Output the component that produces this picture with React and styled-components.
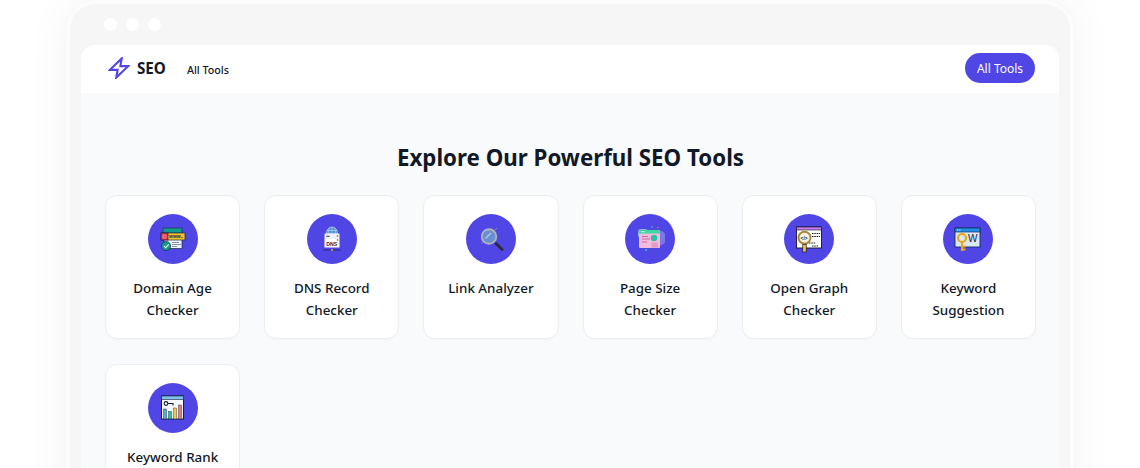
import React from "react";
import styled, { createGlobalStyle } from "styled-components";

const Global = createGlobalStyle`
  html, body { margin: 0; padding: 0; background: #fff; }
  body { font-family: "Noto Sans", "Open Sans", sans-serif; color: #111827; overflow: hidden; height: 468px; }
`;
const Stage = styled.div`
  height: 468px;
  overflow: hidden;
  padding: 0 66px;
`;
const Frame = styled.div`
  width: 1008px;
  height: 560px;
  box-sizing: border-box;
  background: #f6f6f6;
  border: 4px solid #fcfcfc;
  border-radius: 30px;
  box-shadow: 0 0 3px rgba(0, 0, 0, 0.025), 0 0 44px rgba(0, 0, 0, 0.055);
  padding: 0 11px;
`;
const Dots = styled.div`
  display: flex;
  gap: 9px;
  height: 41px;
  padding: 14px 0 0 23px;
  box-sizing: border-box;
`;
const Dot = styled.span`
  width: 13px;
  height: 13px;
  border-radius: 50%;
  background: #fff;
`;
const Window = styled.div`
  background: #f9fafb;
  border-radius: 14px 14px 0 0;
  overflow: hidden;
  height: 520px;
`;
const Header = styled.header`
  height: 48px;
  box-sizing: border-box;
  background: #fff;
  display: flex;
  align-items: center;
  padding: 0 24px 2px 27px;
`;
const Brand = styled.div`
  display: flex;
  align-items: center;
  gap: 7px;
  font-size: 15.2px;
  font-weight: 700;
  color: #111827;
`;
const NavLink = styled.a`
  font-size: 10.7px;
  font-weight: 500;
  color: #111827;
  margin-left: 21px;
  margin-top: 4px;
`;
const Pill = styled.button`
  margin-left: auto;
  height: 30px;
  width: 70px;
  border: 0;
  padding: 0;
  border-radius: 15px;
  background: #4f46e5;
  color: #fff;
  font: 400 12px "Noto Sans", sans-serif;
`;
const Main = styled.main`
  padding: 47px 23px 0 24px;
`;
const Title = styled.h1`
  margin: 0 0 19px;
  font-size: 22.3px;
  line-height: 36px;
  font-weight: 700;
  text-align: center;
  color: #111827;
`;
const Grid = styled.div`
  display: grid;
  grid-template-columns: repeat(6, 1fr);
  gap: 25px 24px;
`;
const Card = styled.div`
  height: 144px;
  box-sizing: border-box;
  background: #fff;
  border: 1px solid #eceef1;
  border-radius: 12px;
  padding: 18px 12px 0;
  display: flex;
  flex-direction: column;
  align-items: center;
  box-shadow: 0 1px 2px rgba(0, 0, 0, 0.02);
`;
const Badge = styled.div`
  width: 50px;
  height: 50px;
  border-radius: 50%;
  background: #4f46e5;
  display: flex;
  align-items: center;
  justify-content: center;
  flex: none;
`;
const Label = styled.div`
  margin-top: 13px;
  font-size: 13.4px;
  line-height: 22px;
  font-weight: 500;
  text-align: center;
  color: #111827;
  max-width: 100px;
`;

const Ico = styled.svg`
  width: 30px;
  height: 30px;
  display: block;
`;
const Mini = styled.text`
  font-family: "Liberation Sans", sans-serif;
  font-weight: 700;
`;

const Bolt = () => (
  <svg width="22" height="22" viewBox="0 0 24 24" fill="none" stroke="#4f46e5" strokeWidth="2.3" strokeLinejoin="miter">
    <path d="M15 1.5 13.5 10H22L9 22.5 10.5 14H2Z" />
  </svg>
);

const DomainIcon = () => (
  <Ico viewBox="0 0 30 30">
    <rect x="5" y="4" width="19" height="5" fill="#0f9d8a" stroke="#1f2a44" strokeWidth=".6" />
    <rect x="6" y="15" width="18" height="9.5" fill="#eef1f8" stroke="#1f2a44" strokeWidth=".7" />
    <rect x="3" y="9" width="24" height="7" fill="#f4c430" stroke="#1f2a44" strokeWidth=".7" />
    <rect x="3" y="9" width="7" height="7" fill="#e02d3c" stroke="#1f2a44" strokeWidth=".7" />
    <rect x="5" y="11" width="3" height="3" fill="none" stroke="#fff" strokeWidth=".5" />
    <Mini x="11" y="14.4" fontSize="5" fill="#1f2a44">www..</Mini>
    <path d="M14 18.5h7M14 20.5h9M14 22.5h5" stroke="#7c8aa5" strokeWidth=".9" />
    <circle cx="8" cy="22" r="4.6" fill="#0f9d8a" stroke="#1f2a44" strokeWidth=".7" />
    <path d="m6 22 1.7 1.8 3-3.5" fill="none" stroke="#fff" strokeWidth="1.1" />
  </Ico>
);
const DnsIcon = () => (
  <Ico viewBox="0 0 30 30">
    <path d="M9.5 9.5C9.5 5 12.5 3 15 3s5.500 2 5.500 6.500Z" fill="#4a90d9" stroke="#dfe6f5" strokeWidth=".6" />
    <path d="M15 3v6M12.500 4c-.8 2-.8 3-.8 5.500M17.500 4c.8 2 .8 3 .8 5.500M10 6.500h10" stroke="#dfe6f5" strokeWidth=".5" fill="none" />
    <rect x="7.500" y="9.500" width="15" height="5.500" fill="#eef1f8" />
    <rect x="7.500" y="15" width="15" height="8.500" fill="#fff" />
    <path d="M9.500 12.200h3" stroke="#1f2a44" strokeWidth="1.1" />
    <circle cx="20.500" cy="12" r=".9" fill="#c08a5a" />
    <circle cx="20.500" cy="16" r=".9" fill="#c08a5a" />
    <Mini x="9.300" y="21.800" fontSize="5.200" fill="#1f2a44">DNS</Mini>
    <path d="M6 26h18" stroke="#2c2a80" strokeWidth="1" />
    <rect x="14" y="25" width="2" height="2" fill="#b98a52" />
  </Ico>
);
const LinkIcon = () => (
  <Ico viewBox="0 0 30 30">
    <path d="M5.500 19.500 21 4" stroke="#8a9a7a" strokeWidth=".9" />
    <circle cx="13" cy="12.500" r="7.300" fill="#6a8fd0" stroke="#aeb2bd" strokeWidth="1.900" />
    <path d="m9.500 14.500 5.500-5.500" stroke="#a9c3e8" strokeWidth="1.500" />
    <path d="m20 19.500 6 6" stroke="#2a2a3a" strokeWidth="2.800" strokeLinecap="round" />
  </Ico>
);
const PageIcon = () => (
  <Ico viewBox="0 0 30 30">
    <circle cx="24" cy="14" r="7.500" fill="#7d77e8" />
    <rect x="3" y="5" width="10" height="9" rx="3" fill="#86b9e6" />
    <rect x="4" y="6" width="21" height="18" rx="1" fill="#f0bddc" />
    <rect x="4" y="6" width="21" height="3.500" fill="#3fd8a0" />
    <path d="M6 7.700h4" stroke="#fff" strokeWidth=".7" />
    <path d="M7 12.500h6M7 15h8M7 18h5" stroke="#cf5c9d" strokeWidth=".9" />
    <circle cx="19" cy="14" r="3.200" fill="#33bfa5" />
    <rect x="16.500" y="18.500" width="6.500" height="5" fill="#e59ac6" />
    <circle cx="11" cy="26" r="1.200" fill="#3aa9c4" />
    <circle cx="17" cy="3" r=".8" fill="#3fd8a0" />
    <circle cx="23" cy="3.500" r=".8" fill="#e0589a" />
  </Ico>
);
const GraphIcon = () => (
  <Ico viewBox="0 0 30 30">
    <rect x="2.500" y="3" width="25" height="21" fill="#fff" stroke="#15152a" strokeWidth=".9" />
    <rect x="2.500" y="3" width="25" height="3" fill="#c77dea" stroke="#15152a" strokeWidth=".6" />
    <path d="M18 9.500h8M18 12.500h8M15 19h7M18 22h6" stroke="#15152a" strokeWidth="1.200" strokeDasharray="1.500 .8" />
    <circle cx="10.500" cy="13.700" r="6" fill="#f6f3e7" stroke="#a98a3a" strokeWidth="2" />
    <Mini x="6.600" y="15.500" fontSize="4.800" fill="#15152a">&lt;/&gt;</Mini>
    <rect x="8.800" y="20.500" width="3.400" height="7.500" fill="#f3c84a" stroke="#15152a" strokeWidth=".7" />
  </Ico>
);
const KeywordIcon = () => (
  <Ico viewBox="0 0 30 30">
    <rect x="2" y="4" width="25" height="19" fill="#d9e8fb" stroke="#12305c" strokeWidth=".9" />
    <rect x="2" y="4" width="25" height="4" fill="#1f8fe8" stroke="#12305c" strokeWidth=".7" />
    <path d="M4 6h4" stroke="#fff" strokeWidth="1" strokeDasharray="1 .8" />
    <text x="15" y="18" fontSize="10" fontFamily="Liberation Sans, sans-serif" fill="#15223c">W</text>
    <circle cx="9" cy="14" r="4" fill="#d9e8fb" stroke="#e6a913" strokeWidth="2.200" />
    <path d="M9 18v9M9 22.500h3.500M9 25.500h3.500" stroke="#e6a913" strokeWidth="2.200" fill="none" />
  </Ico>
);
const RankIcon = () => (
  <Ico viewBox="0 0 30 30">
    <rect x="3.500" y="3" width="22" height="23" fill="#f6f7f9" stroke="#15223c" strokeWidth="1" />
    <rect x="3.500" y="3" width="22" height="3.500" fill="#7fc4e8" stroke="#15223c" strokeWidth=".6" />
    <circle cx="8" cy="10.500" r="1.900" fill="none" stroke="#15223c" strokeWidth="1.100" />
    <path d="M10 10.500h5v2" fill="none" stroke="#15223c" strokeWidth="1.100" />
    <rect x="5.500" y="16" width="3" height="10" fill="#57a9d8" stroke="#15223c" strokeWidth=".4" />
    <rect x="10.500" y="18.500" width="3" height="7.500" fill="#2fc29a" stroke="#15223c" strokeWidth=".4" />
    <rect x="15.500" y="15" width="3" height="11" fill="#f3c84a" stroke="#15223c" strokeWidth=".4" />
    <rect x="20.500" y="12" width="3" height="14" fill="#ee7a6b" stroke="#15223c" strokeWidth=".4" />
  </Ico>
);

const tools = [
  { name: "Domain Age Checker", Icon: DomainIcon },
  { name: "DNS Record Checker", Icon: DnsIcon },
  { name: "Link Analyzer", Icon: LinkIcon },
  { name: "Page Size Checker", Icon: PageIcon },
  { name: "Open Graph Checker", Icon: GraphIcon },
  { name: "Keyword Suggestion", Icon: KeywordIcon },
  { name: "Keyword Rank Checker", Icon: RankIcon },
];

export default function App() {
  return (
    <Stage>
      <Global />
      <Frame>
        <Dots>
          <Dot />
          <Dot />
          <Dot />
        </Dots>
        <Window>
          <Header>
            <Brand>
              <Bolt />
              SEO
            </Brand>
            <NavLink>All Tools</NavLink>
            <Pill>All Tools</Pill>
          </Header>
          <Main>
            <Title>Explore Our Powerful SEO Tools</Title>
            <Grid>
              {tools.map(({ name, Icon }) => (
                <Card key={name}>
                  <Badge>
                    <Icon />
                  </Badge>
                  <Label>{name}</Label>
                </Card>
              ))}
            </Grid>
          </Main>
        </Window>
      </Frame>
    </Stage>
  );
}
